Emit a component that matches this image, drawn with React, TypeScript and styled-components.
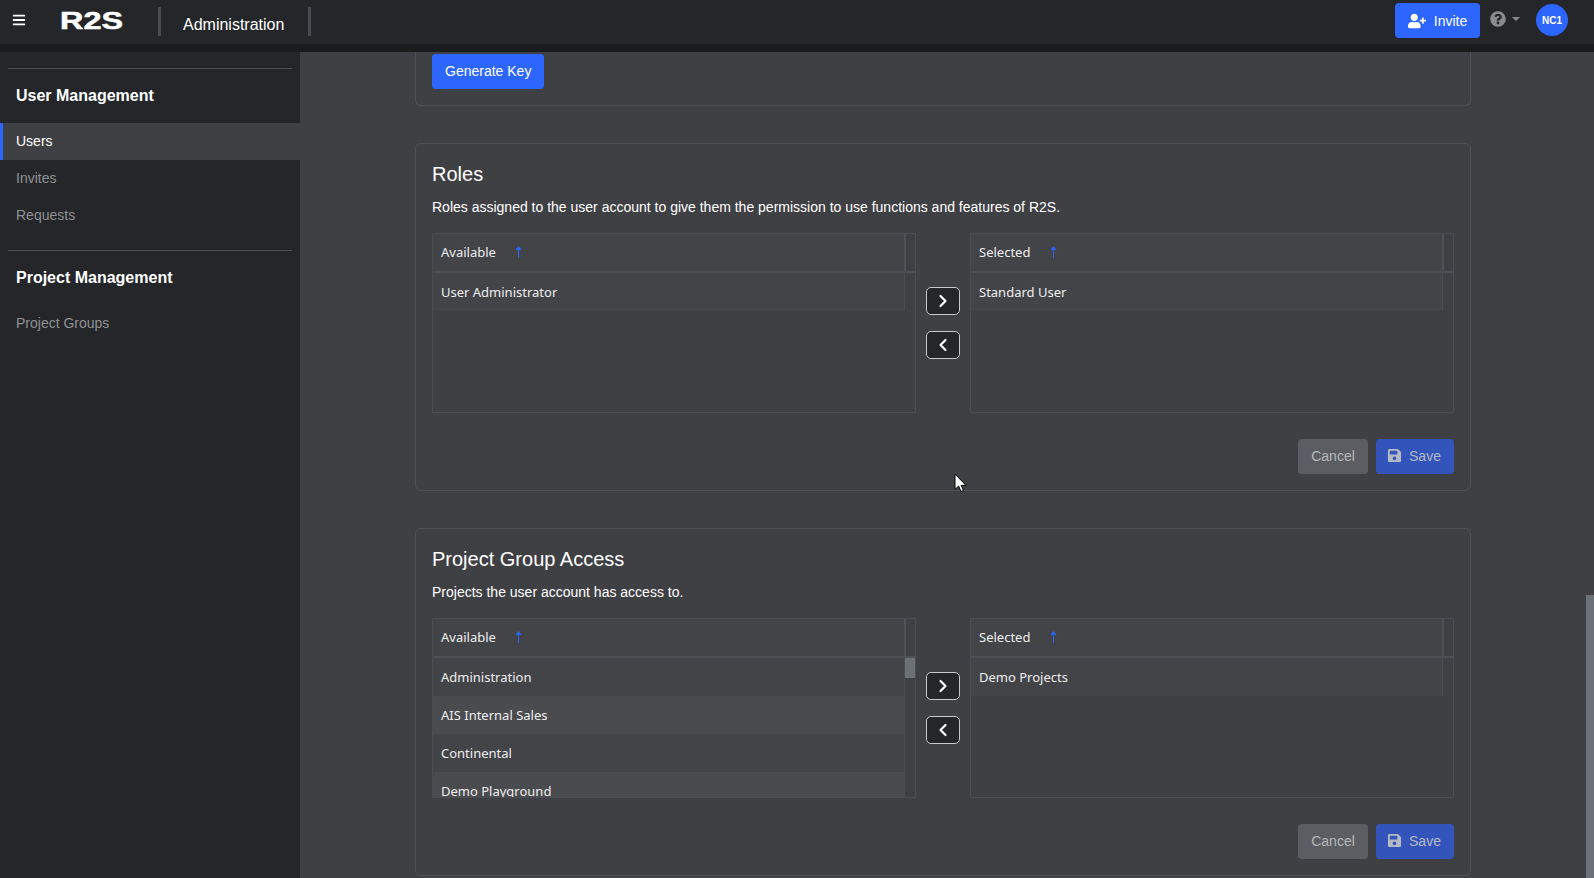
import React from "react";
import styled, { createGlobalStyle } from "styled-components";
import { FaBars, FaUserPlus, FaQuestionCircle, FaSave } from "react-icons/fa";
import { ChevronLeft, ChevronRight } from "lucide-react";

const Global = createGlobalStyle`
  html, body { margin: 0; padding: 0; height: 100%; overflow: hidden; background: #3f4044; }
  * { box-sizing: border-box; }
  body { font-family: "Liberation Sans", Arial, sans-serif; color: #fff; }
`;

const Shell = styled.div`
  position: relative;
  width: 1594px;
  height: 878px;
  display: flex;
  flex-direction: column;
  overflow: hidden;
`;

const TopBar = styled.header`
  flex: none;
  height: 44px;
  background: #242629;
  display: flex;
  align-items: center;
  padding-right: 26px;
`;

const MenuButton = styled.div`
  width: 60px;
  padding-left: 12px;
  display: flex;
  align-items: center;
  height: 40px;
  font-size: 14px;
  color: #fff;
  margin-top: -5px;
`;

const Logo = styled.svg`
  display: block;
  flex: none;
  width: 64px;
  height: 20px;
  margin-right: 34px;
  margin-top: -2px;
  overflow: visible;
`;

const VBar = styled.div`
  width: 3px;
  height: 29px;
  background: #4b4c52;
  margin-top: -1px;
`;

const AppName = styled.div`
  font-size: 16px;
  padding: 5px 0 0 22px;
  width: 147px;
  white-space: nowrap;
`;

const Spacer = styled.div`
  flex: 1;
`;

const InviteButton = styled.button`
  width: 85px;
  height: 35px;
  border: 0;
  border-radius: 4px;
  background: #2d66ff;
  color: #fff;
  font: 14px "Liberation Sans", Arial, sans-serif;
  display: flex;
  align-items: center;
  justify-content: center;
  gap: 8px;
  margin-top: -3px;
  padding: 0;
  svg { font-size: 18px; }
`;

const HelpMenu = styled.div`
  display: flex;
  align-items: center;
  color: #8a8b8f;
  margin-left: 10px;
  margin-top: -6px;
  font-size: 16px;
  gap: 6px;
  width: 46px;
`;

const Caret = styled.span`
  width: 0;
  height: 0;
  border-left: 4px solid transparent;
  border-right: 4px solid transparent;
  border-top: 4px solid #8a8b8f;
`;

const Avatar = styled.div`
  width: 32px;
  height: 32px;
  border-radius: 50%;
  background: #2d66ff;
  font-size: 10px;
  font-weight: 700;
  display: flex;
  align-items: center;
  justify-content: center;
  margin-top: -4px;
`;

const Strip = styled.div`
  flex: none;
  height: 8px;
  background: #1a1b1d;
`;

const Body = styled.div`
  flex: 1;
  min-height: 0;
  display: flex;
`;

const Sidebar = styled.nav`
  flex: none;
  width: 300px;
  background: #242629;
  padding-top: 16px;
`;

const SideDivider = styled.div`
  height: 1px;
  margin: 0 8px;
  background: #505156;
`;

const SideTitle = styled.div<{ $gap: number }>`
  font-size: 16px;
  font-weight: 700;
  line-height: 18px;
  padding-left: 16px;
  margin-top: 18px;
  margin-bottom: ${(p) => p.$gap}px;
`;

const SideItem = styled.div<{ $active?: boolean }>`
  height: 37px;
  display: flex;
  align-items: center;
  font-size: 14px;
  padding-bottom: 2px;
  padding-left: ${(p) => (p.$active ? 13 : 16)}px;
  color: ${(p) => (p.$active ? "#fff" : "#8f9094")};
  background: ${(p) => (p.$active ? "#3f4044" : "transparent")};
  border-left: ${(p) => (p.$active ? "3px solid #2d66ff" : "0")};
`;

const SideGroup = styled.div`
  padding-bottom: 16px;
`;

const Main = styled.main`
  flex: 1;
  min-width: 0;
  background: #3f4044;
  overflow: hidden;
  padding: 0 115px;
`;

const PageScrollbar = styled.div`
  flex: none;
  width: 8px;
  display: flex;
  flex-direction: column;
  justify-content: flex-end;
`;

const PageThumb = styled.div`
  height: 283px;
  background: #6c7077;
`;

const Card = styled.section`
  border: 1px solid #505156;
  border-radius: 6px;
  padding: 17px 16px 16px;
  margin-bottom: 37px;
`;

const KeyCard = styled(Card)`
  border-top: 0;
  border-radius: 0 0 6px 6px;
  padding: 2px 16px 16px;
`;

const PrimaryButton = styled.button`
  height: 35px;
  padding: 0 13px 2px;
  border: 0;
  border-radius: 4px;
  background: #2d66ff;
  color: #fff;
  font: 14px "Liberation Sans", Arial, sans-serif;
`;

const CardTitle = styled.h2`
  margin: 0 0 10px;
  font-size: 20px;
  font-weight: 400;
  line-height: 26px;
`;

const CardText = styled.p`
  margin: 0 0 15px;
  font-size: 14px;
  line-height: 21px;
`;

const Picker = styled.div`
  display: grid;
  grid-template-columns: 484px 54px 484px;
`;

const ListPanel = styled.div`
  position: relative;
  height: 180px;
  border: 1px solid #4c4d52;
  overflow: hidden;
  display: flex;
`;

const ListColumn = styled.div`
  flex: 1;
  min-width: 0;
  display: flex;
  flex-direction: column;
`;

const ListHead = styled.div`
  flex: none;
  height: 39px;
  background: #434448;
  border-bottom: 2px solid #4f5055;
  border-right: 2px solid #505156;
  display: flex;
  align-items: center;
  font: 13px "Noto Sans", sans-serif;
  padding: 0 0 2px 8px;
  color: #eee;
`;

const HeadLabel = styled.span<{ $w: number }>`
  width: ${(p) => p.$w}px;
`;

const ListRow = styled.div<{ $even?: boolean }>`
  flex: none;
  height: 38px;
  margin-right: 1px;
  background: ${(p) => (p.$even ? "#4a4b4f" : "#434448")};
  border-right: 1px solid #4c4d52;
  display: flex;
  align-items: center;
  font: 13px "Noto Sans", sans-serif;
  padding-left: 8px;
  color: #eee;
`;

const ScrollGutter = styled.div`
  flex: none;
  width: 9px;
  display: flex;
  flex-direction: column;
`;

const GutterHead = styled.div`
  flex: none;
  height: 39px;
  border-bottom: 2px solid #4f5055;
`;

const GutterThumb = styled.div`
  height: 20px;
  margin-left: -1px;
  background: #6c7077;
`;

const Movers = styled.div`
  display: flex;
  flex-direction: column;
  align-items: center;
  gap: 16px;
  padding-top: 54px;
`;

const MoveButton = styled.button`
  width: 34px;
  height: 28px;
  padding: 0;
  border: 1px solid #c8c9cc;
  border-radius: 5px;
  background: #242629;
  color: #fff;
  display: flex;
  align-items: center;
  justify-content: center;
`;

const Actions = styled.div`
  display: flex;
  justify-content: flex-end;
  gap: 8px;
  margin-top: 26px;
`;

const CancelButton = styled.button`
  width: 70px;
  height: 35px;
  border: 0;
  border-radius: 4px;
  padding: 0 0 2px;
  background: #5b5d62;
  color: #b5b7bb;
  font: 14px "Liberation Sans", Arial, sans-serif;
`;

const SaveButton = styled.button`
  width: 78px;
  height: 35px;
  border: 0;
  border-radius: 4px;
  padding: 0 2px 2px 0;
  background: #3355bb;
  color: #b5b9c4;
  font: 14px "Liberation Sans", Arial, sans-serif;
  display: flex;
  align-items: center;
  justify-content: center;
  gap: 7px;
  svg { font-size: 15px; }
`;

const Pointer = styled.svg`
  position: absolute;
  left: 954px;
  top: 473px;
  width: 13px;
  height: 20px;
`;

const SortArrow = () => (
  <svg width="7" height="12" viewBox="0 0 7 12">
    <path d="M3.5 0 L6.5 4 H4 V12 H3 V4 H0.5 Z" fill="#2d66ff" />
  </svg>
);

type ListProps = { title: string; labelWidth: number; items: string[]; scroll?: boolean };

const List = ({ title, labelWidth, items, scroll }: ListProps) => (
  <ListPanel>
    <ListColumn>
      <ListHead>
        <HeadLabel $w={labelWidth}>{title}</HeadLabel>
        <SortArrow />
      </ListHead>
      {items.map((it, i) => (
        <ListRow key={it} $even={i % 2 === 1}>
          {it}
        </ListRow>
      ))}
    </ListColumn>
    <ScrollGutter>
      <GutterHead />
      {scroll && <GutterThumb />}
    </ScrollGutter>
  </ListPanel>
);

type PickerProps = { title: string; text: string; available: string[]; selected: string[]; scroll?: boolean };

const PickerCard = ({ title, text, available, selected, scroll }: PickerProps) => (
  <Card>
    <CardTitle>{title}</CardTitle>
    <CardText>{text}</CardText>
    <Picker>
      <List title="Available" labelWidth={74} items={available} scroll={scroll} />
      <Movers>
        <MoveButton><ChevronRight size={20} strokeWidth={2.6} /></MoveButton>
        <MoveButton><ChevronLeft size={20} strokeWidth={2.6} /></MoveButton>
      </Movers>
      <List title="Selected" labelWidth={71} items={selected} />
    </Picker>
    <Actions>
      <CancelButton>Cancel</CancelButton>
      <SaveButton><FaSave />Save</SaveButton>
    </Actions>
  </Card>
);

export default function App() {
  return (
    <Shell>
      <Global />
      <TopBar>
        <MenuButton><FaBars /></MenuButton>
        <Logo viewBox="0 0 64 20">
          <text x="0" y="18" fontFamily="Liberation Sans" fontWeight="700" fontSize="23" fill="#fff" stroke="#fff" strokeWidth="0.5" textLength="63" lengthAdjust="spacingAndGlyphs">R2S</text>
        </Logo>
        <VBar />
        <AppName>Administration</AppName>
        <VBar />
        <Spacer />
        <InviteButton><FaUserPlus />Invite</InviteButton>
        <HelpMenu><FaQuestionCircle /><Caret /></HelpMenu>
        <Avatar>NC1</Avatar>
      </TopBar>
      <Strip />
      <Body>
        <Sidebar>
          <SideDivider />
          <SideTitle $gap={18}>User Management</SideTitle>
          <SideGroup>
            <SideItem $active>Users</SideItem>
            <SideItem>Invites</SideItem>
            <SideItem>Requests</SideItem>
          </SideGroup>
          <SideDivider />
          <SideTitle $gap={18}>Project Management</SideTitle>
          <SideItem>Project Groups</SideItem>
        </Sidebar>
        <Main>
          <KeyCard>
            <PrimaryButton>Generate Key</PrimaryButton>
          </KeyCard>
          <PickerCard
            title="Roles"
            text="Roles assigned to the user account to give them the permission to use functions and features of R2S."
            available={["User Administrator"]}
            selected={["Standard User"]}
          />
          <PickerCard
            title="Project Group Access"
            text="Projects the user account has access to."
            available={["Administration", "AIS Internal Sales", "Continental", "Demo Playground"]}
            selected={["Demo Projects"]}
            scroll
          />
        </Main>
        <PageScrollbar><PageThumb /></PageScrollbar>
      </Body>
      <Pointer viewBox="0 0 13 20">
        <path d="M1 1 V16.5 L4.6 13 L7 18.5 L9.5 17.4 L7.2 12.4 H12 Z" fill="#fff" stroke="#000" strokeWidth="1" />
      </Pointer>
    </Shell>
  );
}
